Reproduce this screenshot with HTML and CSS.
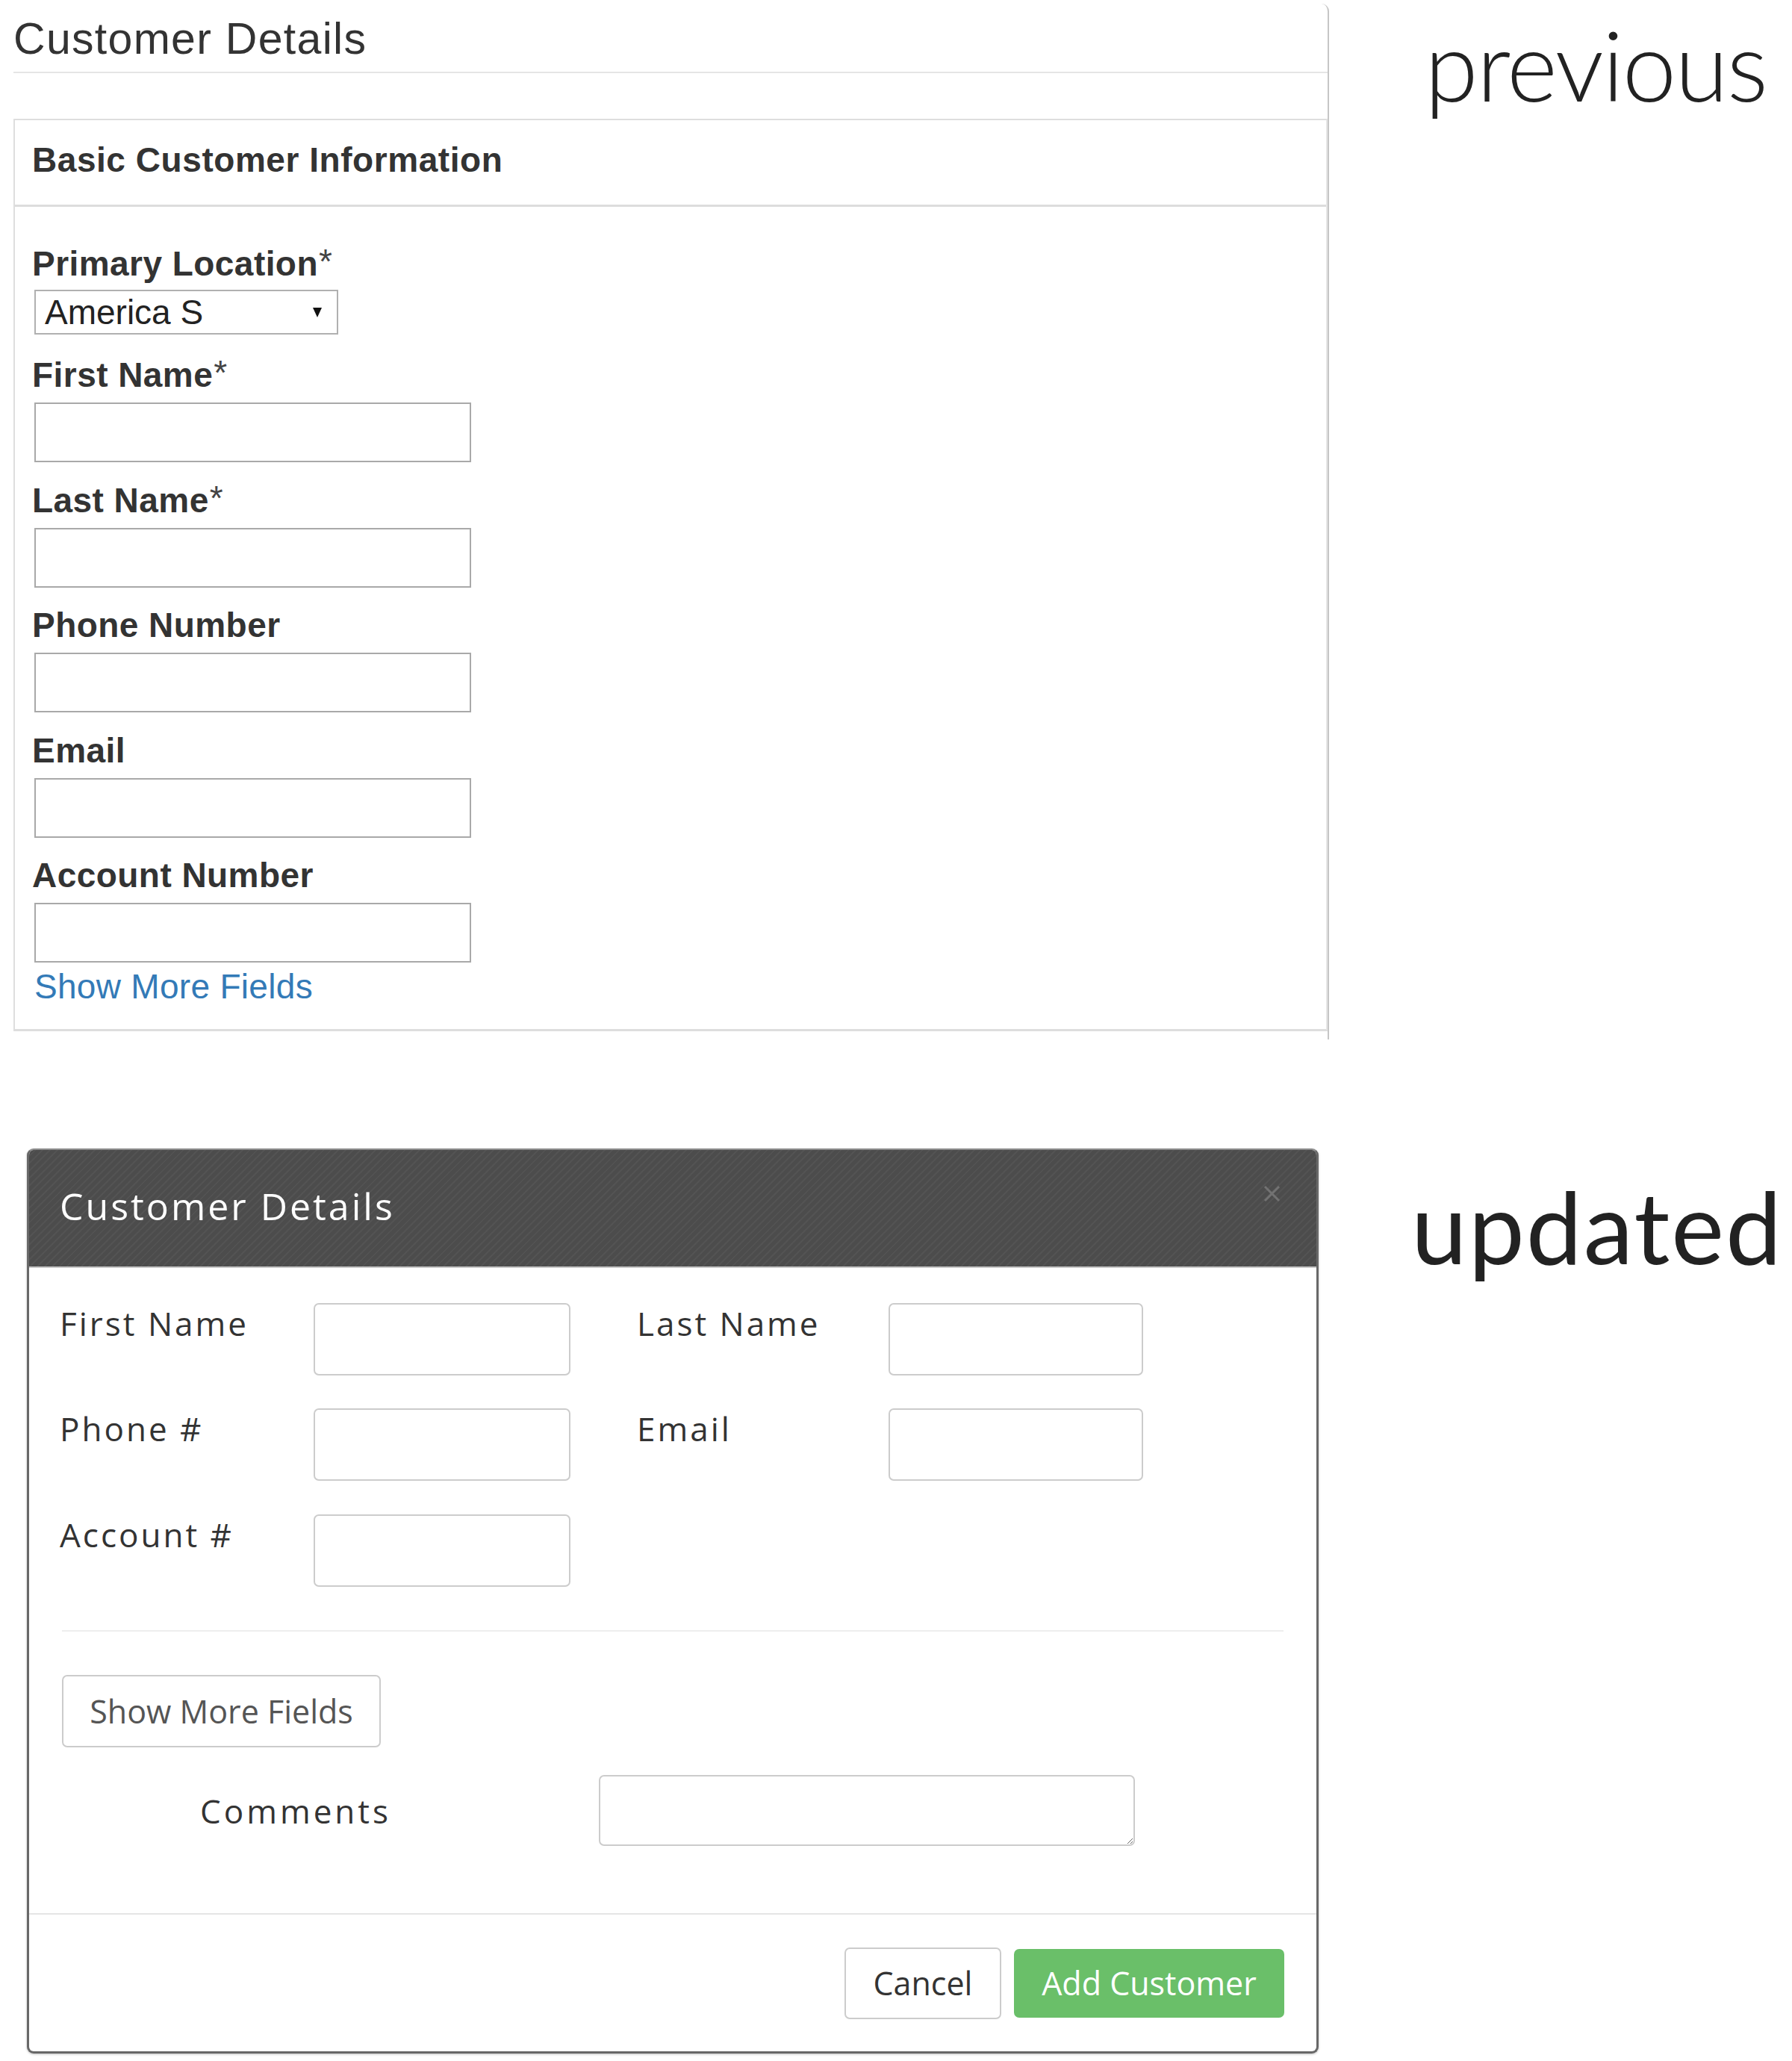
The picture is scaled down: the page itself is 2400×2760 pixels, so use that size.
FILE: index.html
```html
<!DOCTYPE html>
<html lang="en">
<head>
<meta charset="utf-8">
<title>Customer Details – previous / updated</title>
<link rel="stylesheet" href="styles.css">
</head>
<body>
<main class="page">
  <section class="row row-old">
    <div class="old-frame">
      <h2 class="old-title">Customer Details</h2>
      <div class="old-panel">
        <div class="old-heading">Basic Customer Information</div>
        <div class="old-body">
          <div class="old-field old-field-select">
            <label class="old-label">Primary Location<span class="req">*</span></label>
            <div class="old-select">
              <span>America S</span>
              <svg class="old-arrow" width="18" height="17" viewBox="0 0 18 17"><polygon points="3,2 15,2 9,15" fill="#111"/></svg>
            </div>
          </div>
          <div class="old-field">
            <label class="old-label">First Name<span class="req">*</span></label>
            <input class="old-input" type="text">
          </div>
          <div class="old-field">
            <label class="old-label">Last Name<span class="req">*</span></label>
            <input class="old-input" type="text">
          </div>
          <div class="old-field">
            <label class="old-label">Phone Number</label>
            <input class="old-input" type="text">
          </div>
          <div class="old-field">
            <label class="old-label">Email</label>
            <input class="old-input" type="text">
          </div>
          <div class="old-field old-field-last">
            <label class="old-label">Account Number</label>
            <input class="old-input" type="text">
          </div>
          <a class="old-link" href="#">Show More Fields</a>
        </div>
      </div>
    </div>
    <div class="tag tag-prev">previous</div>
  </section>

  <section class="row row-new">
    <div class="modal">
      <div class="modal-head">
        <h2 class="modal-title">Customer Details</h2>
        <span class="modal-close">
          <svg width="25" height="25" viewBox="0 0 25 25"><path d="M3 3 L22 22 M22 3 L3 22" stroke="#727272" stroke-width="3" fill="none"/></svg>
        </span>
      </div>
      <div class="modal-body">
        <div class="grid">
          <label class="m-label">First Name</label>
          <input class="m-input" type="text">
          <label class="m-label second">Last Name</label>
          <input class="m-input" type="text">
          <label class="m-label">Phone #</label>
          <input class="m-input" type="text">
          <label class="m-label second">Email</label>
          <input class="m-input" type="text">
          <label class="m-label">Account #</label>
          <input class="m-input" type="text">
        </div>
        <hr class="sep">
        <button class="more-btn" type="button">Show More Fields</button>
        <div class="comments">
          <label class="m-label comments-label">Comments</label>
          <textarea class="comments-box"></textarea>
        </div>
      </div>
      <div class="modal-foot">
        <button class="btn btn-cancel" type="button">Cancel</button>
        <button class="btn btn-add" type="button">Add Customer</button>
      </div>
    </div>
    <div class="tag tag-upd">updated</div>
  </section>
</main>
</body>
</html>
```

FILE: styles.css
```css
* { box-sizing: border-box; }
html, body { margin: 0; padding: 0; background: #fff; }
body { width: 2400px; min-height: 2760px; }

.row { display: flex; align-items: flex-start; }

/* ---------- previous ---------- */
.old-frame {
  width: 1780px;
  margin-top: 5px;
  padding: 0 0 11px 18px;
  border-right: 2px solid #c6c6c6;
  border-top-right-radius: 10px;
  font-family: "Liberation Sans", Arial, sans-serif;
  color: #333;
}
.old-title {
  margin: 0;
  padding: 15px 0 12px 0;
  font-size: 59px;
  line-height: 64px;
  font-weight: 400;
  letter-spacing: 1.3px;
  color: #333;
  border-bottom: 2px solid #e5e5e5;
}
.old-panel {
  margin-top: 61px;
  border: 2px solid #dedede;
  border-bottom-width: 3px;
  border-right-color: #e6e6e6;
}
.old-heading {
  padding: 27px 0 33px 23px;
  font-size: 46px;
  line-height: 53px;
  font-weight: 700;
  letter-spacing: 0.55px;
  color: #333;
  border-bottom: 3px solid #dddddd;
}
.old-body { padding: 50px 0 30.4px 26px; }
.old-field { margin-bottom: 24.5px; }
.old-field-select { margin-bottom: 28px; }
.old-field-last { margin-bottom: 5.6px; }
.old-label {
  display: block;
  margin: 0 0 10px -3px;
  font-size: 46px;
  line-height: 53px;
  font-weight: 700;
  letter-spacing: 0.45px;
  color: #333;
}
.old-field-select .old-label { margin-bottom: 8px; }
.req { font-weight: 400; color: #444; font-size: 46px; vertical-align: top; line-height: 46px; margin-left: 1px; }
.old-select {
  display: flex;
  align-items: center;
  justify-content: space-between;
  width: 407px;
  height: 60px;
  padding: 0 17px 0 12px;
  border: 2px solid #b0b0b0;
  background: #fff;
  font-size: 46px;
  line-height: 53px;
  color: #222;
}
.old-arrow { display: block; }
.old-input {
  display: block;
  width: 585px;
  height: 80px;
  margin: 0;
  padding: 0 8px;
  border: 2px solid #a9a9a9;
  background: #fff;
  font: 400 40px "Liberation Sans", Arial, sans-serif;
}
.old-link {
  display: block;
  font-size: 46px;
  line-height: 53px;
  letter-spacing: 0.3px;
  color: #337ab7;
  text-decoration: none;
}

/* ---------- labels ---------- */
.tag {
  font-family: Lato, "Open Sans", sans-serif;
  color: #222;
  line-height: 1;
  white-space: nowrap;
}
.tag-prev { font-size: 130px; font-weight: 300; padding: 21px 0 0 128px; letter-spacing: -2px; }
.tag-upd { font-size: 134px; font-weight: 400; padding: 37px 0 0 124px; letter-spacing: 2px; }

/* ---------- updated modal ---------- */
.row-new { margin-top: 146px; }
.modal {
  width: 1730px;
  margin-left: 36px;
  border: 3px solid #686868;
  border-top: 2px solid #8c8c8c;
  border-radius: 9px;
  overflow: hidden;
  background: #fff;
  box-shadow: 0 1px 3px rgba(0, 0, 0, 0.25);
  font-family: "Open Sans", "Noto Sans", sans-serif;
  color: #333;
}
.modal-head {
  display: flex;
  justify-content: space-between;
  align-items: flex-start;
  padding: 44.6px 47px 51.4px 41px;
  background: repeating-linear-gradient(135deg, #4c4c4c 0 5px, #535353 5px 7px);
  border-bottom: 2px solid #c8c8c8;
}
.modal-title {
  margin: 0;
  font-size: 50px;
  line-height: 60px;
  font-weight: 400;
  letter-spacing: 3px;
  color: #fff;
}
.modal-close { display: block; width: 25px; height: 25px; margin-top: 1px; }
.modal-close svg { display: block; }

.modal-body { padding: 47px 44px 90px 44px; }
.grid {
  display: grid;
  grid-template-columns: 337px 344px 92px 334px 341px;
  row-gap: 44.5px;
}
.m-label {
  display: block;
  margin-left: -3px;
  padding-top: 2px;
  font-size: 44px;
  line-height: 51.6px;
  letter-spacing: 3px;
  color: #333;
}
.m-label.second { grid-column: 4; }
.m-input {
  display: block;
  width: 100%;
  height: 97px;
  margin: 0;
  padding: 0 14px;
  border: 2px solid #cccccc;
  border-radius: 7px;
  background: #fff;
  font: 400 40px "Open Sans", sans-serif;
}
.sep {
  height: 2px;
  margin: 58px 0 0;
  border: 0;
  background: #eeeeee;
}
.more-btn {
  display: block;
  margin-top: 58px;
  width: 427px;
  height: 97px;
  padding: 0;
  border: 2px solid #cccccc;
  border-radius: 7px;
  background: #fff;
  font: 400 43px "Open Sans", sans-serif;
  color: #555;
}
.comments {
  display: grid;
  grid-template-columns: 719px 718px;
  align-items: center;
  margin-top: 37px;
}
.comments-label { margin-left: 0; padding-left: 185px; letter-spacing: 4px; }
.comments-box {
  display: block;
  width: 718px;
  height: 95px;
  margin: 0;
  padding: 10px 14px;
  border: 2px solid #cccccc;
  border-radius: 7px;
  background: #fff;
  font: 400 40px "Open Sans", sans-serif;
  resize: both;
}
.modal-foot {
  display: flex;
  justify-content: flex-end;
  align-items: center;
  gap: 17px;
  padding: 44px 43px 43px;
  border-top: 2px solid #e5e5e5;
}
.btn {
  padding: 0;
  border-radius: 7px;
  font: 400 43px "Open Sans", sans-serif;
}
.btn-cancel {
  width: 210px;
  height: 96px;
  border: 2px solid #cccccc;
  background: #fff;
  color: #333;
}
.btn-add {
  width: 362px;
  height: 92px;
  border: 0;
  background: #6abf69;
  color: #fff;
}
```
